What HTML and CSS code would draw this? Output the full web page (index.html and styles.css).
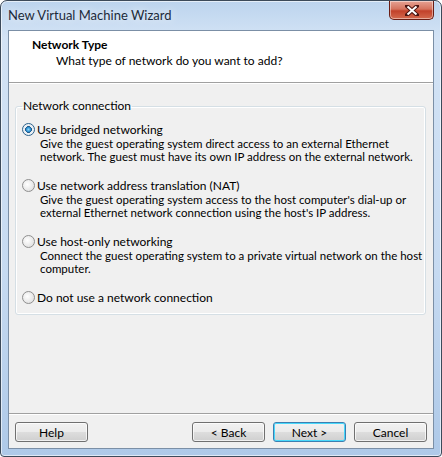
FILE: index.html
```html
<!DOCTYPE html>
<html lang="en">
<head>
    <meta charset="UTF-8">
    <title>New Virtual Machine Wizard</title>
    <link rel="stylesheet" href="styles.css">
</head>
<body>

<div class="window">
    <div class="titlebar">
        <span class="title">New Virtual Machine Wizard</span>
        <button class="close" aria-label="Close">
            <svg width="14" height="11" viewBox="0 0 14 11">
                <path d="M2 1 L12 10 M12 1 L2 10" stroke="#4a1410" stroke-width="4" stroke-linecap="square"/>
                <path d="M2.5 1.5 L11.5 9.5 M11.5 1.5 L2.5 9.5" stroke="#fff" stroke-width="2"/>
            </svg>
        </button>
    </div>

    <div class="client">
        <div class="header">
            <h1>Network Type</h1>
            <p>What type of network do you want to add?</p>
        </div>

        <div class="content">
            <fieldset class="group">
                <legend>Network connection</legend>

                <label class="option">
                    <input type="radio" name="net" checked>
                    <span class="radio"></span>
                    <span class="option-title">Use bridged networking</span>
                    <span class="option-desc">Give the guest operating system direct access to an external Ethernet<br>network. The guest must have its own IP address on the external network.</span>
                </label>

                <label class="option">
                    <input type="radio" name="net">
                    <span class="radio"></span>
                    <span class="option-title">Use network address translation (NAT)</span>
                    <span class="option-desc">Give the guest operating system access to the host computer's dial-up or<br>external Ethernet network connection using the host's IP address.</span>
                </label>

                <label class="option">
                    <input type="radio" name="net">
                    <span class="radio"></span>
                    <span class="option-title">Use host-only networking</span>
                    <span class="option-desc">Connect the guest operating system to a private virtual network on the host<br>computer.</span>
                </label>

                <label class="option">
                    <input type="radio" name="net">
                    <span class="radio"></span>
                    <span class="option-title">Do not use a network connection</span>
                </label>
            </fieldset>
        </div>

        <div class="footer">
            <button class="btn">Help</button>
            <span class="spacer"></span>
            <button class="btn">&lt; Back</button>
            <button class="btn default">Next &gt;</button>
            <button class="btn">Cancel</button>
        </div>
    </div>
</div>

</body>
</html>
```

FILE: styles.css
```css
* {
    margin: 0;
    padding: 0;
    box-sizing: border-box;
}

body {
    font-family: Lato, 'Liberation Sans', sans-serif;
    font-size: 12px;
    color: #000;
    background: #fff;
}

.window {
    width: 442px;
    height: 457px;
    display: flex;
    flex-direction: column;
    border: 1px solid #3c4a5a;
    border-radius: 7px 7px 4px 4px;
    background: linear-gradient(180deg, #bcd4ee 0%, #d3e3f5 8%, #c6daf1 60%, #aec9e8 100%);
    box-shadow: inset 0 0 0 1px rgba(255, 255, 255, 0.6);
}

.titlebar {
    height: 29px;
    display: flex;
    align-items: flex-start;
    justify-content: space-between;
    padding: 0 7px 0 7px;
}

.title {
    margin-top: 6px;
    font-size: 13px;
    color: #1c2a3a;
    text-shadow: 0 0 8px rgba(255, 255, 255, 0.9);
}

.close {
    width: 45px;
    height: 19px;
    border: 1px solid #6a1d14;
    border-top: none;
    border-radius: 0 0 5px 5px;
    background: linear-gradient(180deg, #e6a293 0%, #d5735e 45%, #c2412a 55%, #d46a4e 100%);
    box-shadow: inset 0 0 0 1px rgba(255, 255, 255, 0.45);
    display: flex;
    align-items: center;
    justify-content: center;
}

.client {
    flex: 1;
    margin: 0 7px 7px 7px;
    display: flex;
    flex-direction: column;
    background: #f0f0f0;
    border: 1px solid #7b8fa6;
}

.header {
    height: 52px;
    background: #fff;
    border-bottom: 1px solid #a0a0a0;
    box-shadow: 0 1px 0 #fff;
    padding: 6px 0 0 23px;
}

.header h1 {
    font-size: 12px;
    font-weight: 700;
    line-height: 16px;
}

.header p {
    padding-left: 24px;
    line-height: 16px;
}

.content {
    flex: 1;
    padding: 16px 7px 0 6px;
}

.group {
    min-width: 0;
    height: 216px;
    border: 1px solid #d5dfe5;
    border-radius: 3px;
    box-shadow: 0 0 0 1px #fff inset;
    padding: 9px 6px 0 6px;
}

.group legend {
    padding: 0 1px;
    line-height: 14px;
}

.option {
    display: grid;
    grid-template-columns: 15px minmax(0, 1fr);
    margin-bottom: 15px;
}

.option input {
    display: none;
}

.radio {
    width: 13px;
    height: 13px;
    margin-top: 1px;
    border-radius: 50%;
    border: 1px solid #8f8f8f;
    background: radial-gradient(circle at 40% 40%, #fff 0%, #e4e4e4 70%, #d0d0d0 100%);
}

.option input:checked + .radio {
    border-color: #2c628b;
    background: radial-gradient(circle, #8fd6fa 0%, #2b8fcf 28%, #1c5180 40%, #e8eef4 46%, #f4f4f4 100%);
}

.option-title {
    line-height: 15px;
}

.option-desc {
    grid-column: 2;
    padding-left: 3px;
    font-size: 11.5px;
    line-height: 13px;
    white-space: nowrap;
    color: #000;
}

.footer {
    height: 35px;
    border-top: 1px solid #a0a0a0;
    box-shadow: inset 0 1px 0 #fff;
    display: flex;
    align-items: flex-start;
    gap: 8px;
    padding: 8px 6px 0 6px;
}

.spacer {
    flex: 1;
}

.btn {
    width: 73px;
    height: 20px;
    font-family: inherit;
    font-size: 12px;
    color: #000;
    border: 1px solid #707070;
    border-radius: 3px;
    background: linear-gradient(180deg, #f2f2f2 0%, #ebebeb 48%, #dddddd 52%, #cfcfcf 100%);
    box-shadow: inset 0 0 0 1px rgba(255, 255, 255, 0.7);
}

.btn.default {
    border-color: #3c7fb1;
    box-shadow: inset 0 0 0 1px #48d8fb;
}
```
